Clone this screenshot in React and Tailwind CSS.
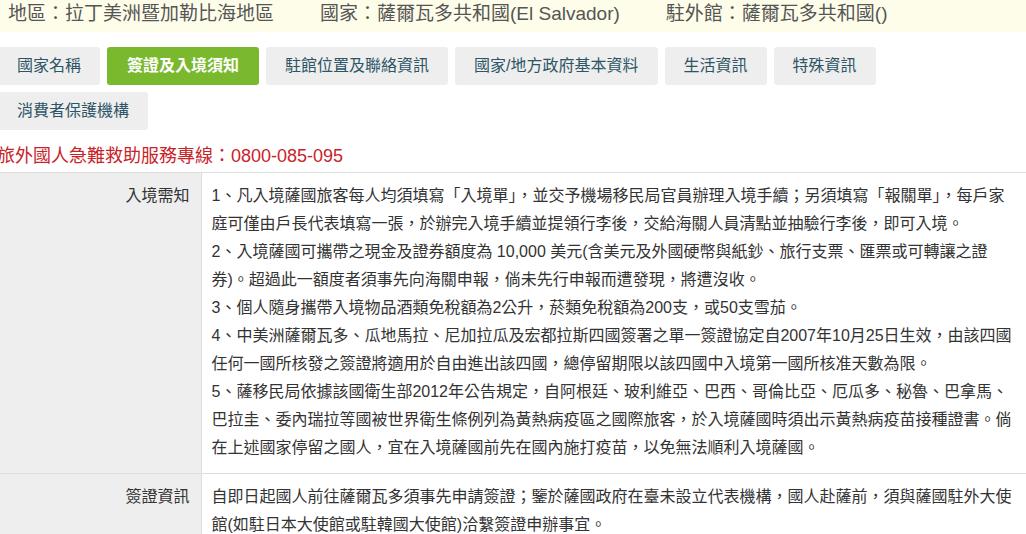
const tabs = [
  { label: "國家名稱" },
  { label: "簽證及入境須知", active: true },
  { label: "駐館位置及聯絡資訊" },
  { label: "國家/地方政府基本資料" },
  { label: "生活資訊" },
  { label: "特殊資訊" },
  { label: "消費者保護機構" },
];

const rows = [
  {
    title: "入境需知",
    lines: [
      "1、凡入境薩國旅客每人均須填寫「入境單」，並交予機場移民局官員辦理入境手續；另須填寫「報關單」，每戶家",
      "庭可僅由戶長代表填寫一張，於辦完入境手續並提領行李後，交給海關人員清點並抽驗行李後，即可入境。",
      "2、入境薩國可攜帶之現金及證券額度為 10,000 美元(含美元及外國硬幣與紙鈔、旅行支票、匯票或可轉讓之證",
      "券)。超過此一額度者須事先向海關申報，倘未先行申報而遭發現，將遭沒收。",
      "3、個人隨身攜帶入境物品酒類免稅額為2公升，菸類免稅額為200支，或50支雪茄。",
      "4、中美洲薩爾瓦多、瓜地馬拉、尼加拉瓜及宏都拉斯四國簽署之單一簽證協定自2007年10月25日生效，由該四國",
      "任何一國所核發之簽證將適用於自由進出該四國，總停留期限以該四國中入境第一國所核准天數為限。",
      "5、薩移民局依據該國衛生部2012年公告規定，自阿根廷、玻利維亞、巴西、哥倫比亞、厄瓜多、秘魯、巴拿馬、",
      "巴拉圭、委內瑞拉等國被世界衛生條例列為黃熱病疫區之國際旅客，於入境薩國時須出示黃熱病疫苗接種證書。倘",
      "在上述國家停留之國人，宜在入境薩國前先在國內施打疫苗，以免無法順利入境薩國。",
    ],
  },
  {
    title: "簽證資訊",
    lines: [
      "自即日起國人前往薩爾瓦多須事先申請簽證；鑒於薩國政府在臺未設立代表機構，國人赴薩前，須與薩國駐外大使",
      "館(如駐日本大使館或駐韓國大使館)洽繫簽證申辦事宜。",
    ],
  },
];

const font = { fontFamily: '"Liberation Sans", "Noto Sans CJK TC", sans-serif' };

export default function App() {
  return (
    <div className="min-h-screen bg-white overflow-hidden" style={font}>
      <div className="h-[32px] bg-[#fefde9] flex items-start gap-[46px] pl-2 text-[19px] leading-[28px] text-[#555] whitespace-nowrap">
        <span>地區：拉丁美洲暨加勒比海地區</span>
        <span>國家：薩爾瓦多共和國(El Salvador)</span>
        <span>駐外館：薩爾瓦多共和國()</span>
      </div>

      <div className="-ml-[2px]">
        <div className="mt-[15px] flex flex-wrap gap-[7px] w-[890px]">
          {tabs.map((t) => (
            <div
              key={t.label}
              className={`h-[38px] flex items-center rounded-[3px] text-[16px] whitespace-nowrap ${
                t.active
                  ? "bg-[#7ab82e] text-white font-bold px-5"
                  : "bg-[#eeeeee] text-[#2d5566] px-[19px]"
              }`}
            >
              {t.label}
            </div>
          ))}
        </div>

        <div className="mt-[13px] leading-[26px] text-[18px] text-[#c9232a] -ml-px">
          旅外國人急難救助服務專線：0800-085-095
        </div>

        <table className="mt-[3px] w-[1040px] border-collapse text-[16px] text-[#333]">
          <tbody>
            {rows.map((r) => (
              <tr key={r.title} className="border-t border-[#dddddd]">
                <th className="w-[203px] bg-[#eeeeee] align-top text-right font-normal pr-[11px] pt-[9px] leading-[28px] border-r border-[#dddddd]">
                  {r.title}
                </th>
                <td className="align-top pl-[10px] pt-[9px] pb-[11px] leading-[28px] whitespace-nowrap">
                  {r.lines.map((l, i) => (
                    <div key={i}>{l}</div>
                  ))}
                </td>
              </tr>
            ))}
          </tbody>
        </table>
      </div>
    </div>
  );
}
